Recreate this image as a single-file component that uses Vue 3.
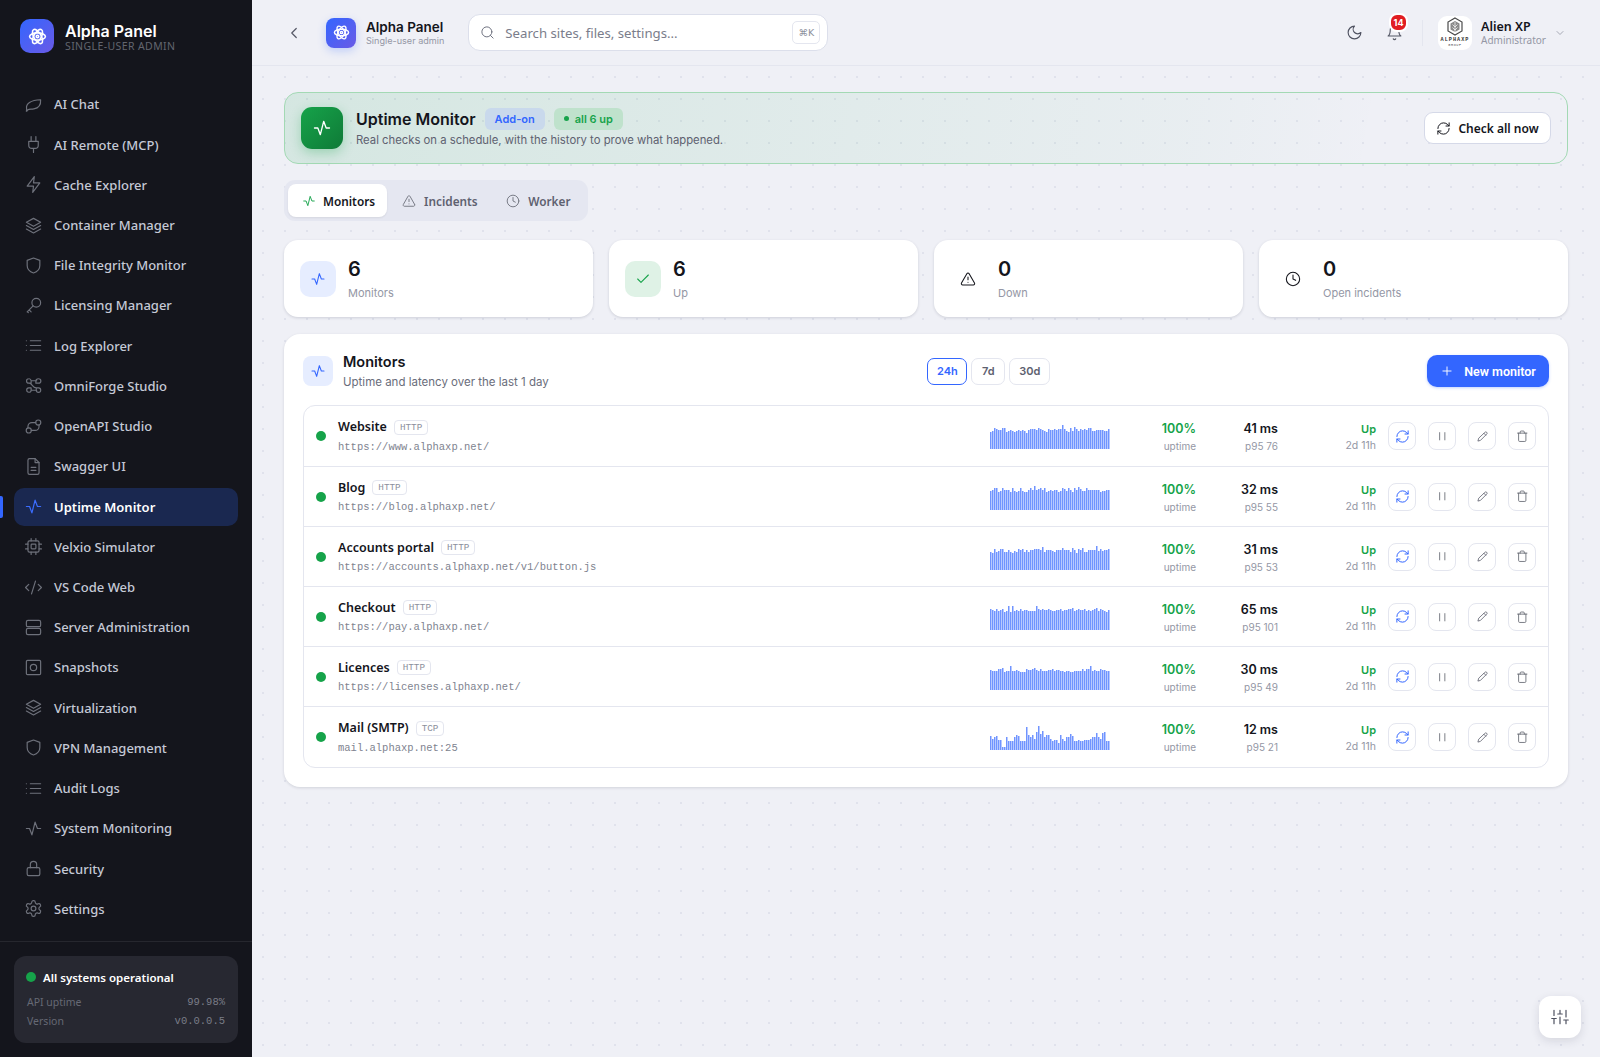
<script setup>
const P = {
  activity: '<path d="M3 12h4l3 8 4-16 3 8h4"/>',
  chat: '<path d="M3 20.5c.6-1.6.4-3 .2-4.4C2.6 11 8 6.5 21 6c.4 5.800-2.500 10.500-8.500 11.500-3 .5-5 .2-6.500.700-1 .3-1.800 1-2.500 2.300z"/>',
  plug: '<path d="M12 22v-5M9 8V2M15 8V2M18 8v5a4 4 0 0 1-4 4h-4a4 4 0 0 1-4-4V8Z"/>',
  zap: '<path d="M13 2 4 14h8l-1 8 9-12h-8l1-8z"/>',
  layers: '<path d="m12 3 9 5-9 5-9-5 9-5z"/><path d="m3 12 9 5 9-5"/><path d="m3 16.500 9 5 9-5"/>',
  shield: '<path d="M12 2.500 20 5.500v6.500c0 5-3.500 8-8 9.500-4.500-1.500-8-4.500-8-9.500V5.500z"/>',
  key: '<circle cx="15.500" cy="8.500" r="5.500"/><path d="M11.500 12.500 4 20M6.500 17.500 9 20M4 20l1.500 1"/>',
  list: '<path d="M8 6h13M8 12h13M8 18h13M3 6h.01M3 12h.01M3 18h.01"/>',
  command: '<path d="M9 6h7M9 18h7M6.500 9c4 0 4 6 9 6h3M6 3.500a2.800 2.800 0 1 0 0 5.600h3V6a2.800 2.800 0 0 0-3-2.500zM18.500 3.500a2.800 2.800 0 1 1 0 5.600H15V6a3 3 0 0 1 3.500-2.500zM6 14.900a2.800 2.800 0 1 0 3 3V15zM18.500 15a2.800 2.800 0 1 1-3 3v-3z"/>',
  route: '<circle cx="6" cy="17" r="3.200"/><circle cx="18" cy="7" r="3.200"/><path d="M14.800 7H10a5 5 0 0 0-5 5v1.800M19 10v2a5 5 0 0 1-5 5H9.200"/>',
  file: '<path d="M14 2H7a2 2 0 0 0-2 2v16a2 2 0 0 0 2 2h10a2 2 0 0 0 2-2V7z"/><path d="M14 2v5h5M9 13h6M9 17h6"/>',
  cpu: '<rect x="5" y="5" width="14" height="14" rx="2"/><rect x="9" y="9" width="6" height="6" rx="1"/><path d="M9 2v3M15 2v3M9 19v3M15 19v3M2 9h3M2 15h3M19 9h3M19 15h3"/>',
  code: '<path d="m18 16 4-4-4-4M6 8l-4 4 4 4M14.500 4l-5 16"/>',
  server: '<rect x="3" y="3" width="18" height="8" rx="2"/><rect x="3" y="13" width="18" height="8" rx="2"/>',
  snapshot: '<rect x="3" y="3" width="18" height="18" rx="1.500"/><circle cx="12" cy="12" r="4"/>',
  lock: '<rect x="4" y="11" width="16" height="10" rx="2"/><path d="M8 11V7a4 4 0 0 1 8 0v4"/>',
  gear: '<path d="M12.220 2h-.44a2 2 0 0 0-2 2v.18a2 2 0 0 1-1 1.730l-.43.25a2 2 0 0 1-2 0l-.15-.08a2 2 0 0 0-2.730.73l-.22.38a2 2 0 0 0 .73 2.730l.15.1a2 2 0 0 1 1 1.720v.51a2 2 0 0 1-1 1.740l-.15.09a2 2 0 0 0-.73 2.730l.22.38a2 2 0 0 0 2.730.73l.15-.08a2 2 0 0 1 2 0l.43.25a2 2 0 0 1 1 1.730V20a2 2 0 0 0 2 2h.44a2 2 0 0 0 2-2v-.18a2 2 0 0 1 1-1.730l.43-.25a2 2 0 0 1 2 0l.15.08a2 2 0 0 0 2.730-.73l.22-.39a2 2 0 0 0-.73-2.730l-.15-.08a2 2 0 0 1-1-1.740v-.5a2 2 0 0 1 1-1.740l.15-.09a2 2 0 0 0 .73-2.730l-.22-.38a2 2 0 0 0-2.730-.73l-.15.08a2 2 0 0 1-2 0l-.43-.25a2 2 0 0 1-1-1.730V4a2 2 0 0 0-2-2z"/><circle cx="12" cy="12" r="3"/>',
  atom: '<circle cx="12" cy="12" r="1.600"/><ellipse cx="12" cy="12" rx="10" ry="4.600"/><ellipse cx="12" cy="12" rx="10" ry="4.600" transform="rotate(60 12 12)"/><ellipse cx="12" cy="12" rx="10" ry="4.600" transform="rotate(120 12 12)"/>',
  search: '<circle cx="11" cy="11" r="8"/><path d="m21 21-4.300-4.300"/>',
  back: '<path d="m15 18-6-6 6-6"/>',
  down: '<path d="m6 9 6 6 6-6"/>',
  moon: '<path d="M12 3a6 6 0 0 0 9 9 9 9 0 1 1-9-9z"/>',
  bell: '<path d="M6 8a6 6 0 0 1 12 0c0 7 3 9 3 9H3s3-2 3-9"/><path d="M10.300 21a1.900 1.900 0 0 0 3.400 0"/>',
  refresh: '<path d="M3 12a9 9 0 0 1 9-9 9.750 9.750 0 0 1 6.740 2.740L21 8"/><path d="M21 3v5h-5"/><path d="M21 12a9 9 0 0 1-9 9 9.750 9.750 0 0 1-6.740-2.740L3 16"/><path d="M8 16H3v5"/>',
  alert: '<path d="m21.730 18-8-14a2 2 0 0 0-3.480 0l-8 14A2 2 0 0 0 4 21h16a2 2 0 0 0 1.730-3"/><path d="M12 9v4M12 17h.01"/>',
  clock: '<circle cx="12" cy="12" r="10"/><path d="M12 6v6l4 2"/>',
  check: '<path d="M20 6 9 17l-5-5"/>',
  plus: '<path d="M5 12h14M12 5v14"/>',
  pause: '<path d="M7 5v14M17 5v14"/>',
  pencil: '<path d="M17 3a2.850 2.830 0 1 1 4 4L7.500 20.500 2 22l1.500-5.500Z"/><path d="m15 5 4 4"/>',
  trash: '<path d="M3 6h18M19 6v14a2 2 0 0 1-2 2H7a2 2 0 0 1-2-2V6M8 6V4a2 2 0 0 1 2-2h4a2 2 0 0 1 2 2v2"/>',
  sliders: '<path d="M4 21v-7M4 10V3M12 21v-9M12 8V3M20 21v-5M20 12V3M1 14h6M9 8h6M17 16h6"/>'
}

const nav = [
  ['AI Chat', 'chat'], ['AI Remote (MCP)', 'plug'], ['Cache Explorer', 'zap'], ['Container Manager', 'layers'],
  ['File Integrity Monitor', 'shield'], ['Licensing Manager', 'key'], ['Log Explorer', 'list'], ['OmniForge Studio', 'command'],
  ['OpenAPI Studio', 'route'], ['Swagger UI', 'file'], ['Uptime Monitor', 'activity'], ['Velxio Simulator', 'cpu'],
  ['VS Code Web', 'code'], ['Server Administration', 'server'], ['Snapshots', 'snapshot'], ['Virtualization', 'layers'],
  ['VPN Management', 'shield'], ['Audit Logs', 'list'], ['System Monitoring', 'activity'], ['Security', 'lock'], ['Settings', 'gear']
]

const stats = [
  { v: '6', l: 'Monitors', i: 'activity', c: 'blue' },
  { v: '6', l: 'Up', i: 'check', c: 'green' },
  { v: '0', l: 'Down', i: 'alert', c: 'plain' },
  { v: '0', l: 'Open incidents', i: 'clock', c: 'plain' }
]

const monitors = [
  { n: 'Website', t: 'HTTP', u: 'https://www.alphaxp.net/', ms: 41, p: 76, b: [17,18,21,20,19,19,21,21,17,18,19,18,17,18,19,18,19,18,16,19,20,20,20,19,21,20,19,18,17,20,19,19,20,19,20,20,24,20,18,17,21,18,22,20,18,20,19,20,19,21,21,18,18,19,19,19,19,18,18,20] },
  { n: 'Blog', t: 'HTTP', u: 'https://blog.alphaxp.net/', ms: 32, p: 55, b: [19,20,22,22,18,19,22,20,20,20,18,22,19,18,19,22,19,18,18,20,22,20,24,20,21,22,20,22,18,19,20,19,20,20,18,19,22,21,19,22,20,18,22,20,23,21,19,19,22,20,20,20,20,20,20,18,19,19,20,20] },
  { n: 'Accounts portal', t: 'HTTP', u: 'https://accounts.alphaxp.net/v1/button.js', ms: 31, p: 53, b: [18,17,21,18,19,21,21,18,18,20,18,17,19,18,21,20,21,18,20,18,20,20,21,21,21,20,23,18,20,20,20,19,18,20,20,20,22,20,20,20,18,22,20,17,21,20,22,18,18,20,20,20,20,24,19,21,19,20,20,21] },
  { n: 'Checkout', t: 'HTTP', u: 'https://pay.alphaxp.net/', ms: 65, p: 101, b: [21,20,19,21,19,20,21,18,19,24,18,24,19,20,19,21,19,20,20,19,19,19,19,24,21,20,21,20,20,21,20,19,19,20,20,21,19,20,20,21,21,22,19,20,21,20,20,21,19,20,19,20,21,22,19,21,20,19,18,20] },
  { n: 'Licences', t: 'HTTP', u: 'https://licenses.alphaxp.net/', ms: 30, p: 49, b: [20,19,19,19,21,21,22,18,19,19,24,19,19,20,19,18,18,18,21,20,20,21,22,20,19,21,19,19,19,20,20,21,19,20,20,19,19,18,19,19,18,18,19,19,19,19,21,19,21,21,24,19,20,19,19,21,20,20,19,19] },
  { n: 'Mail (SMTP)', t: 'TCP', u: 'mail.alphaxp.net:25', ms: 12, p: 21, b: [14,11,13,14,10,10,3,3,13,9,9,9,13,15,14,9,9,9,23,15,13,15,11,18,24,16,19,13,15,15,11,9,10,10,7,15,11,9,13,13,16,14,9,9,10,9,9,10,10,10,11,13,13,17,13,11,17,18,9,9] }
]
</script>

<template>
  <div class="app">
    <aside class="side">
      <div class="brand">
        <div class="logo big"><svg class="ic" viewBox="0 0 24 24" v-html="P.atom"></svg></div>
        <div class="brand-x">
          <div class="brand-t">Alpha Panel</div>
          <div class="brand-s">SINGLE-USER ADMIN</div>
        </div>
      </div>
      <nav class="nav">
        <a v-for="it in nav" :key="it[0]" class="nav-i" :class="{ on: it[0] === 'Uptime Monitor' }">
          <svg class="ic nav-ic" viewBox="0 0 24 24" v-html="P[it[1]]"></svg>
          <span>{{ it[0] }}</span>
        </a>
      </nav>
      <div class="side-foot">
        <div class="sys">
          <div class="sys-h"><i class="dot"></i>All systems operational</div>
          <div class="sys-r"><span>API uptime</span><code>99.98%</code></div>
          <div class="sys-r"><span>Version</span><code>v0.0.0.5</code></div>
        </div>
      </div>
    </aside>

    <div class="main">
      <header class="top">
        <svg class="ic back" viewBox="0 0 24 24" v-html="P.back"></svg>
        <div class="logo small"><svg class="ic" viewBox="0 0 24 24" v-html="P.atom"></svg></div>
        <div class="top-b">
          <div class="top-t">Alpha Panel</div>
          <div class="top-s">Single-user admin</div>
        </div>
        <div class="search">
          <svg class="ic" viewBox="0 0 24 24" v-html="P.search"></svg>
          <span class="search-t">Search sites, files, settings...</span>
          <kbd>⌘K</kbd>
        </div>
        <div class="top-r">
          <svg class="ic moon" viewBox="0 0 24 24" v-html="P.moon"></svg>
          <div class="bell">
            <svg class="ic" viewBox="0 0 24 24" v-html="P.bell"></svg>
            <span class="badge">14</span>
          </div>
          <i class="vr"></i>
          <div class="avatar">
            <svg viewBox="0 0 34 21" class="av-svg">
              <path d="M17 2l7 4v9l-7 4-7-4V6z" fill="none" stroke="#4a4a4a" stroke-width="1.200"/>
              <path d="M17 5l4.500 2.500v6L17 16l-4.500-2.500v-6z" fill="#8a8a8a"/>
              <path d="M17 6v10M14.500 8.500l2.500 2.500 2.500-2.500M14.500 11.500l2.500 2.500 2.500-2.500" stroke="#fff" stroke-width=".7" fill="none"/>
            </svg>
            <div class="av-t">ALPHAXP</div>
            <div class="av-s">GROUP</div>
          </div>
          <div class="user">
            <div class="user-n">Alien XP</div>
            <div class="user-r">Administrator</div>
          </div>
          <svg class="ic chev" viewBox="0 0 24 24" v-html="P.down"></svg>
        </div>
      </header>

      <main class="content">
        <section class="banner">
          <div class="ban-ic"><svg class="ic" viewBox="0 0 24 24" v-html="P.activity"></svg></div>
          <div class="ban-b">
            <div class="ban-h">
              <span class="ban-t">Uptime Monitor</span>
              <span class="pill blue">Add-on</span>
              <span class="pill green"><i class="mini"></i>all 6 up</span>
            </div>
            <div class="ban-s">Real checks on a schedule, with the history to prove what happened.</div>
          </div>
          <button class="check"><svg class="ic" viewBox="0 0 24 24" v-html="P.refresh"></svg>Check all now</button>
        </section>

        <div class="tabs">
          <div class="tab act"><svg class="ic g" viewBox="0 0 24 24" v-html="P.activity"></svg>Monitors</div>
          <div class="tab"><svg class="ic" viewBox="0 0 24 24" v-html="P.alert"></svg>Incidents</div>
          <div class="tab"><svg class="ic" viewBox="0 0 24 24" v-html="P.clock"></svg>Worker</div>
        </div>

        <div class="stats">
          <div v-for="s in stats" :key="s.l" class="stat">
            <div class="st-ic" :class="s.c"><svg class="ic" viewBox="0 0 24 24" v-html="P[s.i]"></svg></div>
            <div>
              <div class="st-v">{{ s.v }}</div>
              <div class="st-l">{{ s.l }}</div>
            </div>
          </div>
        </div>

        <section class="panel">
          <div class="pan-h">
            <div class="pan-l">
              <div class="pan-ic"><svg class="ic" viewBox="0 0 24 24" v-html="P.activity"></svg></div>
              <div>
                <div class="pan-t">Monitors</div>
                <div class="pan-s">Uptime and latency over the last 1 day</div>
              </div>
            </div>
            <div class="range">
              <button class="rg on">24h</button>
              <button class="rg">7d</button>
              <button class="rg">30d</button>
            </div>
            <button class="new"><svg class="ic" viewBox="0 0 24 24" v-html="P.plus"></svg>New monitor</button>
          </div>

          <div class="list">
            <div v-for="m in monitors" :key="m.n" class="row">
              <i class="dot big-dot"></i>
              <div class="r-main">
                <div class="r-h"><span class="r-n">{{ m.n }}</span><span class="tag">{{ m.t }}</span></div>
                <div class="r-u">{{ m.u }}</div>
              </div>
              <svg class="spark" viewBox="0 0 120 24">
                <rect v-for="(h, i) in m.b" :key="i" :x="i * 2" :y="24 - h" width="1.500" :height="h" />
              </svg>
              <div class="cell up">
                <div class="c-a g-t">100%</div>
                <div class="c-b">uptime</div>
              </div>
              <div class="cell lat">
                <div class="c-a">{{ m.ms }} ms</div>
                <div class="c-b">p95 {{ m.p }}</div>
              </div>
              <div class="cell st">
                <div class="c-s g-t">Up</div>
                <div class="c-b">2d 11h</div>
              </div>
              <div class="acts">
                <button class="act-b blue-i"><svg class="ic" viewBox="0 0 24 24" v-html="P.refresh"></svg></button>
                <button class="act-b"><svg class="ic" viewBox="0 0 24 24" v-html="P.pause"></svg></button>
                <button class="act-b pen"><svg class="ic" viewBox="0 0 24 24" v-html="P.pencil"></svg></button>
                <button class="act-b"><svg class="ic" viewBox="0 0 24 24" v-html="P.trash"></svg></button>
              </div>
            </div>
          </div>
        </section>
      </main>
    </div>

    <button class="fab"><svg class="ic" viewBox="0 0 24 24" v-html="P.sliders"></svg></button>
  </div>
</template>

<style>
html, body { margin: 0; background: #eff0f6; }
</style>

<style scoped>
.app { display: flex; height: 1057px; overflow: hidden; font-family: Inter, "Noto Sans", sans-serif; color: #14151c; }
.ic { fill: none; stroke: currentColor; stroke-width: 1.6; stroke-linecap: round; stroke-linejoin: round; display: block; flex: none; }
button { font-family: inherit; }

.side { width: 252px; flex: none; background: #14151c; display: flex; flex-direction: column; }
.brand { display: flex; align-items: center; gap: 11px; height: 72px; padding: 0 20px; box-sizing: border-box; }
.brand-x { padding-top: 2px; }
.logo { background: linear-gradient(135deg, #3366ff, #6a5ae6); display: flex; align-items: center; justify-content: center; color: #fff; }
.logo.big { width: 34px; height: 34px; border-radius: 10px; }
.logo.big svg { width: 19px; height: 19px; stroke-width: 2; }
.logo.small { width: 30px; height: 30px; border-radius: 8px; box-shadow: 0 3px 8px rgba(51, 102, 255, .25); margin-left: 41px; }
.logo.small svg { width: 17px; height: 17px; stroke-width: 2; }
.brand-t { font-size: 16px; line-height: 18px; font-weight: 600; color: #fff; }
.brand-s { font-family: "Noto Sans", sans-serif; font-size: 10.500px; line-height: 12px; color: #62656f; letter-spacing: .4px; }
.nav { display: flex; flex-direction: column; gap: 2.220px; padding: 13.400px 14px 0; flex: 1; }
.nav-i { display: flex; align-items: center; height: 38px; border-radius: 10px; padding-left: 10px; gap: 11px; color: #c5c9d6; font-family: "Noto Sans", sans-serif; font-size: 13px; font-weight: 500; position: relative; }
.nav-ic { width: 19px; height: 19px; color: #6e717b; stroke-width: 1.500; }
.nav-i.on { background: #1a2850; color: #fff; font-weight: 600; }
.nav-i.on .nav-ic { color: #3b6dff; }
.nav-i.on::before { content: ""; position: absolute; left: -14px; top: 8px; width: 3px; height: 22px; background: #3366ff; border-radius: 0 2px 2px 0; }
.side-foot { border-top: 1px solid #26272e; padding: 14px; }
.sys { background: #272831; border-radius: 12px; padding: 12px 13px 0 12px; height: 87px; box-sizing: border-box; }
.sys-h { display: flex; align-items: center; gap: 7px; color: #fff; font-family: "Noto Sans", sans-serif; font-size: 11.500px; font-weight: 600; height: 18px; margin-bottom: 6px; }
.dot { width: 10px; height: 10px; background: #16a34a; border-radius: 50%; display: block; flex: none; }
.sys-r { display: flex; justify-content: space-between; align-items: center; height: 19px; font-family: "Noto Sans", sans-serif; font-size: 10.500px; color: #666974; }
.sys-r span { margin-left: 1px; }
.sys-r code { font-family: "Liberation Mono", monospace; font-size: 10.500px; color: #7a7d88; }

.main { flex: 1; min-width: 0; display: flex; flex-direction: column; }
.top { height: 66px; flex: none; box-sizing: border-box; border-bottom: 1px solid #e4e6ef; display: flex; align-items: center; padding: 0 32px; }
.back { width: 18px; height: 18px; color: #555866; margin-right: -18px; margin-left: 1px; }
.top-b { margin-left: 10px; }
.top-t { font-size: 13.500px; line-height: 15px; font-weight: 600; }
.top-s { font-size: 9.100px; line-height: 11px; color: #9497a5; }
.search { width: 360px; height: 37px; box-sizing: border-box; margin-left: 24px; background: #fff; border: 1px solid #dcdfeb; border-radius: 12px; display: flex; align-items: center; padding: 0 7px 0 11px; gap: 10px; color: #6f7280; }
.search svg { width: 15px; height: 15px; }
.search-t { flex: 1; font-family: "Noto Sans", sans-serif; font-size: 13.200px; color: #7a7d8b; }
kbd { width: 28px; height: 23px; box-sizing: border-box; border: 1px solid #e4e6ef; border-radius: 5px; font-family: "DejaVu Sans", sans-serif; font-size: 9.500px; color: #8c8f9c; display: flex; align-items: center; justify-content: center; }
.top-r { margin-left: auto; display: flex; align-items: center; }
.moon { width: 17px; height: 17px; color: #4e5160; }
.bell { position: relative; margin-left: 23px; color: #555866; }
.bell svg { width: 17px; height: 17px; }
.badge { position: absolute; left: 3px; top: -11px; min-width: 15px; height: 15px; border-radius: 8px; background: #e11d22; border: 2px solid #fff; color: #fff; font-size: 9px; font-weight: 700; display: flex; align-items: center; justify-content: center; }
.vr { width: 1px; height: 26px; background: #e4e6ef; margin: 0 15px 0 19px; display: block; }
.avatar { width: 34px; height: 34px; border-radius: 9px; background: #fff; overflow: hidden; display: flex; flex-direction: column; align-items: center; }
.av-svg { width: 34px; height: 21px; flex: none; }
.av-t { font-family: "Liberation Mono", monospace; font-size: 5.200px; font-weight: 700; line-height: 6px; letter-spacing: 1px; color: #333; white-space: nowrap; }
.av-s { font-family: "Liberation Mono", monospace; font-size: 3.500px; line-height: 5px; letter-spacing: .6px; color: #555; }
.user { margin-left: 9px; width: 67px; }
.user-n { font-family: "Noto Sans", sans-serif; font-size: 12.500px; line-height: 15px; font-weight: 600; }
.user-r { font-family: "Noto Sans", sans-serif; font-size: 10px; line-height: 13px; color: #9497a5; white-space: nowrap; }
.chev { width: 12px; height: 12px; color: #9497a5; margin-right: 2px; margin-left: 6px; }

.content { flex: 1; padding: 26px 32px 0; background-image: radial-gradient(circle at center, #e0e2ec 1px, transparent 1.500px); background-size: 22px 22px; display: flex; flex-direction: column; }
.banner { height: 72px; box-sizing: border-box; display: flex; align-items: center; padding: 0 16px; border: 1px solid #a3d9b4; border-radius: 14px; background: linear-gradient(100deg, rgba(22, 163, 74, .12), rgba(22, 163, 74, .03) 70%, transparent 85%); }
.ban-ic { width: 42px; height: 42px; border-radius: 11px; background: linear-gradient(135deg, #16a34a, #0f7a37); color: #fff; display: flex; align-items: center; justify-content: center; box-shadow: 0 4px 12px rgba(22, 163, 74, .3); }
.ban-ic svg { width: 20px; height: 20px; }
.ban-b { margin-left: 13px; flex: 1; }
.ban-h { display: flex; align-items: center; gap: 9px; margin-top: -2px; }
.ban-t { font-size: 16px; font-weight: 600; }
.pill { height: 22px; display: inline-flex; align-items: center; padding: 0 10px; border-radius: 6px; font-size: 11px; font-weight: 600; }
.pill.blue { background: #c9d9ec; color: #3366ff; }
.pill.green { background: #bfe2cc; color: #16a34a; gap: 6px; }
.mini { width: 5px; height: 5px; background: #16a34a; border-radius: 50%; display: block; }
.ban-s { font-size: 11.300px; color: #5e6170; line-height: 14px; margin-top: 3px; }
.check { height: 32px; width: 127px; justify-content: center; background: #fff; border: 1px solid #d5d9e8; border-radius: 9px; display: flex; align-items: center; gap: 7px; padding: 0; font-family: "Noto Sans", sans-serif; font-size: 12px; font-weight: 600; color: #14151c; }
.check svg { width: 15px; height: 15px; }

.tabs { align-self: flex-start; display: flex; gap: 0; margin-top: 16px; background: #e5e7f1; border-radius: 11px; padding: 4px; height: 41px; box-sizing: border-box; }
.tab { display: flex; align-items: center; gap: 8px; height: 33px; padding: 0 13.500px 0 15px; font-family: "Noto Sans", sans-serif; font-size: 11.800px; font-weight: 600; color: #5e6170; border-radius: 8px; }
.tab svg { width: 14px; height: 14px; color: #71747f; }
.tab .g { color: #16a34a; }
.tab.act { background: #fff; color: #14151c; box-shadow: 0 1px 2px rgba(20, 21, 28, .08); padding: 0 12px 0 14px; gap: 7px; }

.stats { display: grid; grid-template-columns: repeat(4, 1fr); gap: 16px; margin-top: 19px; }
.stat { background: #fff; border-radius: 14px; height: 77px; box-sizing: border-box; padding: 0 16px; display: flex; align-items: center; gap: 12px; box-shadow: 0 1px 3px rgba(30, 35, 60, .16); }
.st-ic { width: 36px; height: 36px; border-radius: 10px; display: flex; align-items: center; justify-content: center; }
.st-ic svg { width: 16px; height: 16px; }
.st-ic.blue { background: #e6edff; color: #3366ff; }
.st-ic.green { background: #dff2e6; color: #16a34a; }
.st-ic.plain { color: #14151c; }
.st-v { font-size: 20px; font-weight: 600; line-height: 24px; }
.st-l { font-size: 11px; color: #9497a5; line-height: 14px; margin-top: 5px; }

.panel { background: #fff; border-radius: 16px; margin-top: 17px; padding: 21px 19px 19px; box-shadow: 0 1px 3px rgba(30, 35, 60, .14); }
.pan-h { display: flex; align-items: center; justify-content: space-between; height: 32px; margin-bottom: 18px; }
.pan-l { display: flex; align-items: center; gap: 10px; }
.pan-ic { width: 30px; height: 30px; border-radius: 8px; background: #e6edff; color: #3366ff; display: flex; align-items: center; justify-content: center; }
.pan-ic svg { width: 16px; height: 16px; }
.pan-t { font-size: 14.500px; font-weight: 600; line-height: 18px; margin-top: -1px; }
.pan-s { font-size: 11.500px; color: #6a6d7b; line-height: 14px; margin-top: 4px; }
.range { display: flex; gap: 4px; margin-left: 2px; }
.rg { height: 27px; padding: 0; width: 34px; background: #fff; border: 1px solid #e4e6ef; border-radius: 7px; font-size: 11px; font-weight: 600; color: #5e6170; }
.rg:first-child { width: 40px; }
.rg:last-child { width: 41px; }
.rg.on { border-color: #3366ff; color: #3366ff; }
.new { height: 32px; width: 122px; background: #3366ff; border: 0; border-radius: 10px; color: #fff; display: flex; align-items: center; justify-content: center; gap: 10px; font-family: Roboto, sans-serif; font-size: 12.500px; font-weight: 600; box-shadow: 0 1px 3px rgba(51, 102, 255, .3); }
.new svg { width: 14px; height: 14px; }

.list { border: 1px solid #e4e6ef; border-radius: 12px; }
.row { height: 60.100px; box-sizing: border-box; display: flex; align-items: center; padding: 0 12px; }
.row + .row { border-top: 1px solid #e4e6ef; }
.big-dot { margin-right: 12px; }
.r-main { flex: 1; }
.r-h { display: flex; align-items: center; gap: 7px; height: 18px; margin-top: -1px; }
.r-n { font-family: "Noto Sans", sans-serif; font-size: 12.500px; font-weight: 600; }
.tag { height: 15px; box-sizing: border-box; border: 1px solid #e4e6ef; border-radius: 4px; padding: 0 5px; margin-top: 1px; font-family: "Liberation Mono", monospace; font-size: 9.300px; line-height: 13px; color: #8c8f9c; }
.r-u { font-family: "Liberation Mono", monospace; font-size: 10.500px; color: #80838f; line-height: 14px; margin-top: 4px; }
.spark { width: 120px; height: 24px; flex: none; margin-top: 2px; margin-right: 3px; fill: #3366ff; fill-opacity: .7; }
.cell { text-align: right; flex: none; margin-top: 2px; }
.up { width: 83px; }
.lat { width: 82px; }
.st { width: 98px; }
.c-a { font-size: 12.500px; font-weight: 600; line-height: 16px; }
.g-t { color: #16a34a; }
.c-b { font-size: 10px; color: #9497a5; line-height: 13px; margin-top: 3px; }
.st .c-b { font-size: 10.500px; }
.c-s { font-size: 11px; font-weight: 600; line-height: 14px; }
.acts { display: flex; gap: 12px; margin-left: 12px; }
.act-b { width: 28px; height: 28px; padding: 0; background: #fff; border: 1px solid #e4e6ef; border-radius: 8px; display: flex; align-items: center; justify-content: center; color: #62656f; }
.act-b svg { width: 12.500px; height: 12.500px; }
.pen svg { width: 11px; height: 11px; color: #4e5160; }
.blue-i { color: #3366ff; }
.blue-i svg { width: 15px; height: 15px; }

.fab { position: absolute; left: 1539px; top: 996px; width: 42px; height: 42px; padding: 0; background: #fff; border: 0; border-radius: 12px; display: flex; align-items: center; justify-content: center; color: #4e5160; box-shadow: 0 3px 10px rgba(30, 35, 60, .12); }
.fab svg { width: 18px; height: 18px; }
</style>
